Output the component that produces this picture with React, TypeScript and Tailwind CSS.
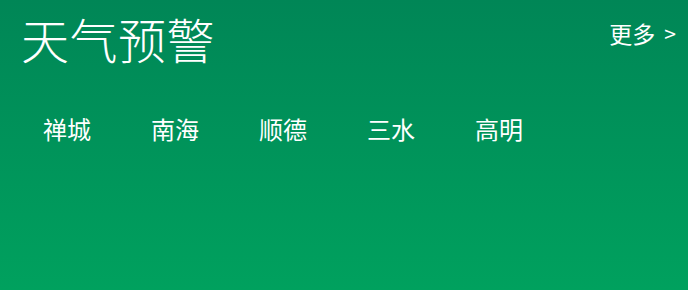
import React from 'react';

const districts = ['禅城', '南海', '顺德', '三水', '高明'];

const App = () => {
  return (
    <div
      className="w-[688px] h-[290px] bg-gradient-to-b from-[#008656] to-[#00a15e] text-white overflow-hidden"
      style={{ fontFamily: '"Noto Sans CJK SC", "Noto Sans", sans-serif' }}
    >
      {/* Header */}
      <div className="flex items-start justify-between pl-[21px] pr-[12px] pt-[10px]">
        <h1 className="text-[48px] leading-[56px] font-light tracking-[0.5px]">天气预警</h1>
        <a className="mt-[10px] text-[23px] leading-[26px] flex items-center gap-[9px] cursor-pointer">
          <span>更多</span>
          <span className="text-[21px]">&gt;</span>
        </a>
      </div>

      {/* Districts */}
      <div className="flex pl-[43px] mt-[48px] gap-[60px]">
        {districts.map((d) => (
          <button key={d} className="text-[24px] leading-[30px] w-[48px] text-left whitespace-nowrap">
            {d}
          </button>
        ))}
      </div>
    </div>
  );
};

export default App;
